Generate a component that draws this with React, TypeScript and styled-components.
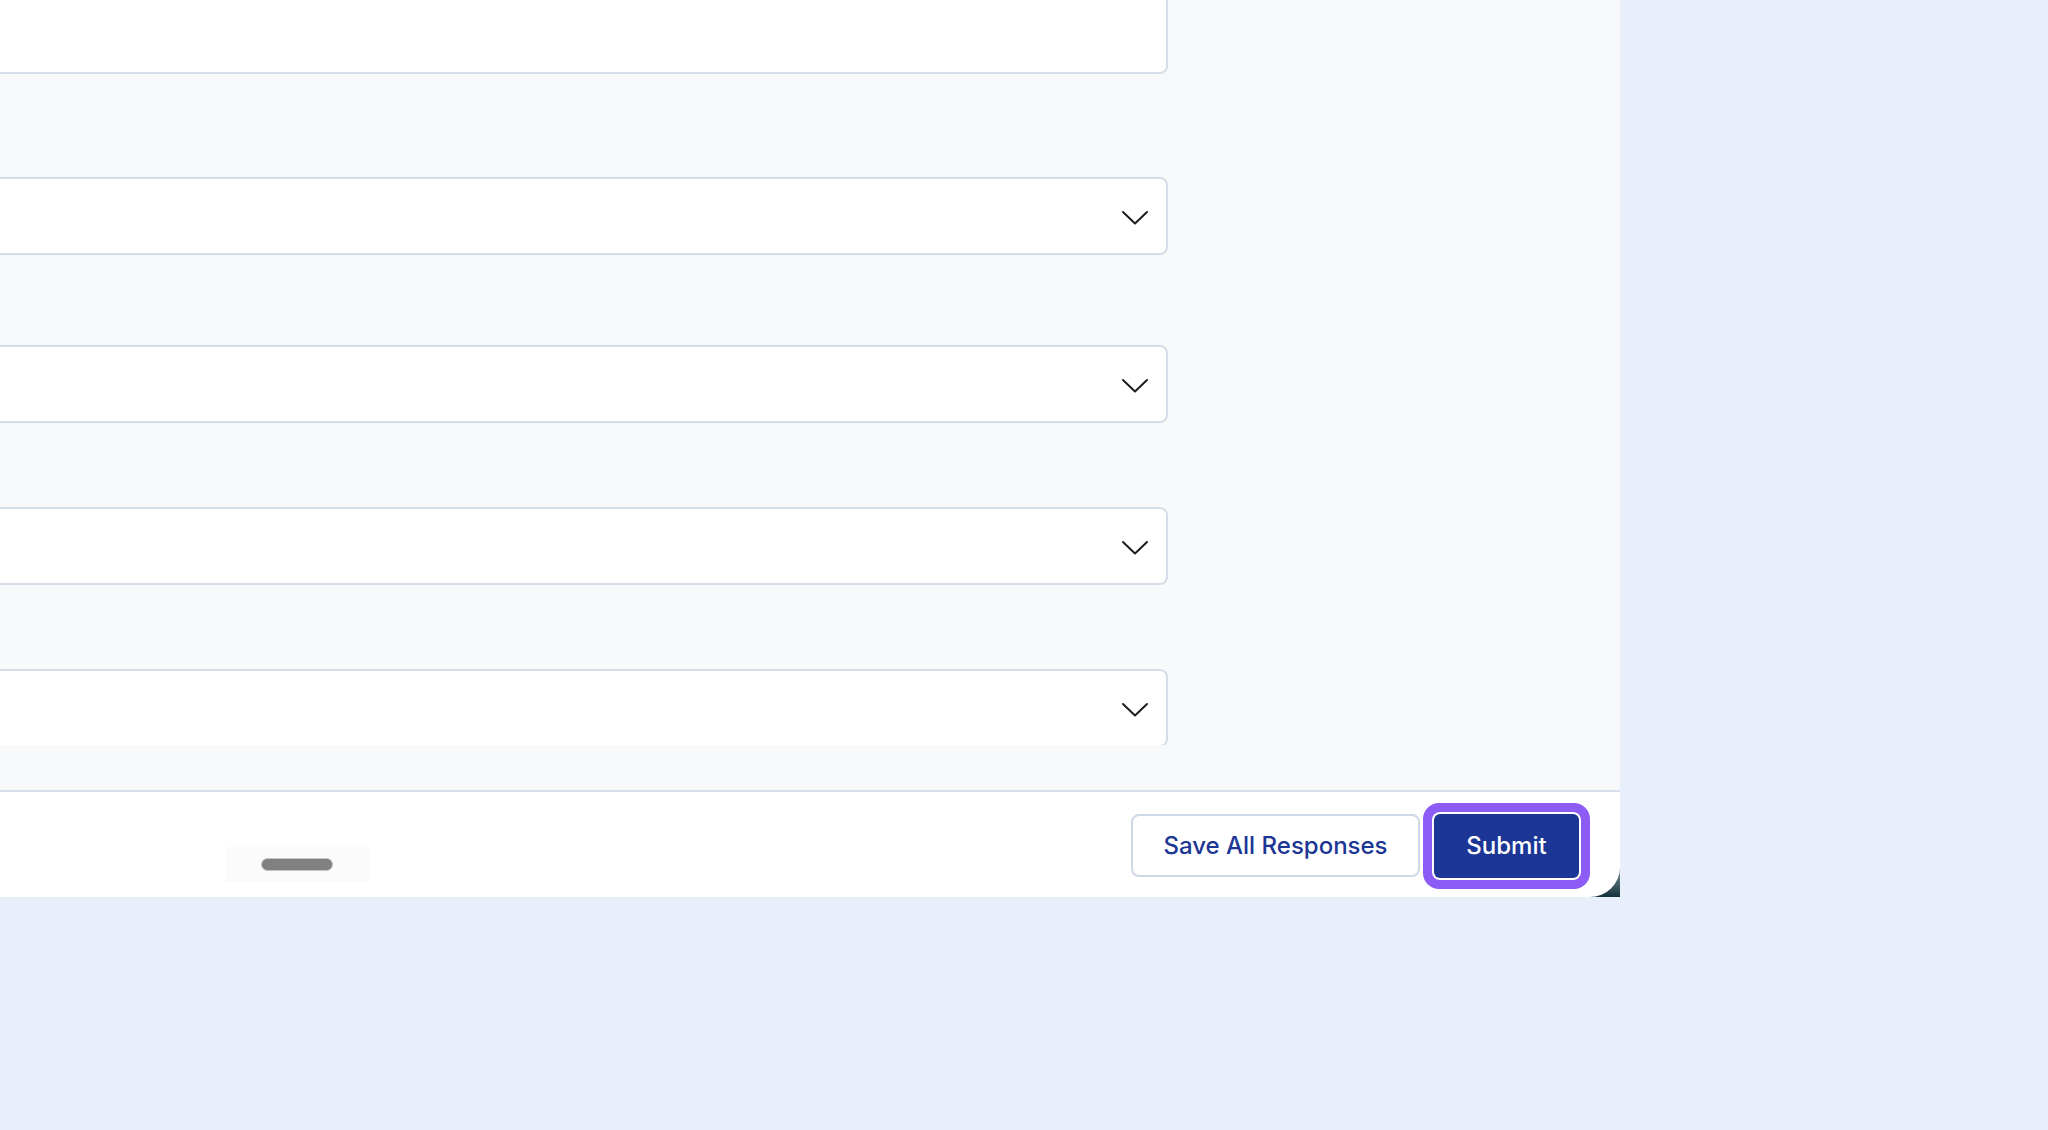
import React from "react";
import styled, { createGlobalStyle } from "styled-components";

const GlobalStyle = createGlobalStyle`
  html, body {
    margin: 0;
    padding: 0;
    background: #e9eefb;
    overflow: hidden;
    font-family: Inter, "Noto Sans", sans-serif;
  }
`;

const Page = styled.div`
  width: 2048px;
  height: 1130px;
  background: #e9eefb;
`;

const Panel = styled.div`
  width: 1620px;
  height: 897px;
  background: #f8f9fb;
  display: flex;
  flex-direction: column;
`;

const Content = styled.div`
  flex: 1;
  min-height: 0;
  display: flex;
  flex-direction: column;
  padding-bottom: 45px;
`;

const Scroller = styled.div`
  flex: 1;
  min-height: 0;
  overflow: hidden;
`;

const Form = styled.div`
  width: 1180px;
  margin-left: -12px;
  margin-top: -20px;
  display: flex;
  flex-direction: column;
`;

const TextField = styled.div`
  height: 94px;
  box-sizing: border-box;
  background: #ffffff;
  border: 2px solid #d5dde9;
  border-radius: 8px;
`;

const SelectBox = styled.div<{ $gap: number }>`
  margin-top: ${(p) => p.$gap}px;
  height: 78px;
  flex-shrink: 0;
  box-sizing: border-box;
  background: #ffffff;
  border: 2px solid #d5dde9;
  border-radius: 8px;
  display: flex;
  align-items: center;
  justify-content: flex-end;
  padding: 4px 17px 0 0;
`;

const FooterWrap = styled.div`
  background: linear-gradient(180deg, #ffffff 60%, #5d7479 82%, #12303a 100%);
`;

const Footer = styled.div`
  height: 107px;
  box-sizing: border-box;
  background: #ffffff;
  border-top: 2px solid #d8dfea;
  border-bottom-right-radius: 30px;
  display: flex;
  align-items: center;
  justify-content: space-between;
  padding-right: 41px;
`;

const ScrollTrack = styled.div`
  align-self: flex-end;
  margin-left: 225px;
  margin-bottom: 15px;
  width: 144px;
  height: 35px;
  background: #fbfbfb;
  display: flex;
  align-items: center;
  padding-left: 36px;
  box-sizing: border-box;
`;

const ScrollThumb = styled.div`
  width: 72px;
  height: 13px;
  box-sizing: border-box;
  background: #808080;
  border: 1px solid #c6c6c6;
  border-radius: 7px;
`;

const Actions = styled.div`
  display: flex;
  align-items: center;
  gap: 14px;
  margin-top: 2px;
`;

const Button = styled.button<{ $primary?: boolean }>`
  width: ${(p) => (p.$primary ? 145 : 289)}px;
  height: ${(p) => (p.$primary ? 64 : 63)}px;
  padding: 0;
  box-sizing: border-box;
  border-radius: ${(p) => (p.$primary ? 6 : 8)}px;
  font-family: Inter, "Noto Sans", sans-serif;
  font-size: 24px;
  font-weight: 500;
  cursor: pointer;
  background: ${(p) => (p.$primary ? "#1b3695" : "#ffffff")};
  color: ${(p) => (p.$primary ? "#ffffff" : "#1b3695")};
  border: ${(p) => (p.$primary ? "none" : "2px solid #cfd8e6")};
  box-shadow: ${(p) =>
    p.$primary ? "0 0 0 2px #ffffff, 0 0 0 11px #8d5cf6" : "none"};
`;

const Chevron = () => (
  <svg width="28" height="16" viewBox="0 0 28 16" fill="none">
    <path
      d="M2 2 L14 13.5 L26 2"
      stroke="#1e1e1e"
      strokeWidth="2"
      strokeLinecap="round"
      strokeLinejoin="round"
    />
  </svg>
);

const selectGaps = [103, 90, 84, 84];

export default function App() {
  return (
    <>
      <GlobalStyle />
      <Page>
        <Panel>
          <Content>
            <Scroller>
              <Form>
                <TextField />
                {selectGaps.map((gap, i) => (
                  <SelectBox key={i} $gap={gap}>
                    <Chevron />
                  </SelectBox>
                ))}
              </Form>
            </Scroller>
          </Content>
          <FooterWrap>
            <Footer>
              <ScrollTrack>
                <ScrollThumb />
              </ScrollTrack>
              <Actions>
                <Button>Save All Responses</Button>
                <Button $primary>Submit</Button>
              </Actions>
            </Footer>
          </FooterWrap>
        </Panel>
      </Page>
    </>
  );
}
